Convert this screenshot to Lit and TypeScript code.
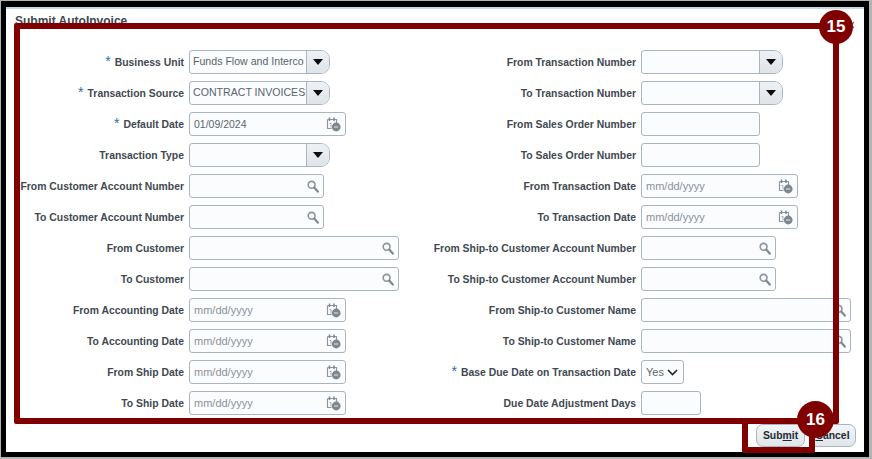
import { LitElement, html, css } from "lit";
import { customElement } from "lit/decorators.js";

type Kind = "select" | "date" | "search" | "text" | "yes";

interface Field {
  label: string;
  kind: Kind;
  width: number;
  value?: string;
  required?: boolean;
}

const leftFields: Field[] = [
  { label: "Business Unit", kind: "select", width: 141, value: "Funds Flow and Interco", required: true },
  { label: "Transaction Source", kind: "select", width: 141, value: "CONTRACT INVOICES", required: true },
  { label: "Default Date", kind: "date", width: 157, value: "01/09/2024", required: true },
  { label: "Transaction Type", kind: "select", width: 141 },
  { label: "From Customer Account Number", kind: "search", width: 135 },
  { label: "To Customer Account Number", kind: "search", width: 135 },
  { label: "From Customer", kind: "search", width: 210 },
  { label: "To Customer", kind: "search", width: 210 },
  { label: "From Accounting Date", kind: "date", width: 157 },
  { label: "To Accounting Date", kind: "date", width: 157 },
  { label: "From Ship Date", kind: "date", width: 157 },
  { label: "To Ship Date", kind: "date", width: 157 },
];

const rightFields: Field[] = [
  { label: "From Transaction Number", kind: "select", width: 142 },
  { label: "To Transaction Number", kind: "select", width: 142 },
  { label: "From Sales Order Number", kind: "text", width: 119 },
  { label: "To Sales Order Number", kind: "text", width: 119 },
  { label: "From Transaction Date", kind: "date", width: 157 },
  { label: "To Transaction Date", kind: "date", width: 157 },
  { label: "From Ship-to Customer Account Number", kind: "search", width: 135 },
  { label: "To Ship-to Customer Account Number", kind: "search", width: 135 },
  { label: "From Ship-to Customer Name", kind: "search", width: 210 },
  { label: "To Ship-to Customer Name", kind: "search", width: 210 },
  { label: "Base Due Date on Transaction Date", kind: "yes", width: 43, required: true },
  { label: "Due Date Adjustment Days", kind: "text", width: 60 },
];

const calendarIcon = html`<svg class="icon" width="15" height="15" viewBox="0 0 15 15">
  <path d="M1.5 2.5h9v5M1.5 2.5v9h4" fill="none" stroke="#8d979f" stroke-width="1.2" />
  <path d="M3.5 .5v3.5M8 .5v3.5" stroke="#7b858d" stroke-width="1.5" />
  <path d="M3.5 6.5h1.5v4" fill="none" stroke="#a3acb3" stroke-width="1" />
  <circle cx="10.2" cy="10" r="4.4" fill="#7e878e" />
  <path d="M8 10h4.2" stroke="#e4e7ea" stroke-width="1" />
</svg>`;

const searchIcon = html`<svg class="icon" width="12" height="13" viewBox="0 0 12 13">
  <circle cx="4.6" cy="4.8" r="3.4" fill="none" stroke="#8b949b" stroke-width="1.6" />
  <path d="M7.2 7.6l3.6 4" stroke="#7f888f" stroke-width="2.2" stroke-linecap="round" />
</svg>`;

@customElement("app-root")
export class AppRoot extends LitElement {
  static styles = css`
    :host {
      display: block;
      position: relative;
      width: 872px;
      height: 459px;
      box-sizing: border-box;
      padding: 1px 3px 2px 1px;
      background: #b4b4b4;
      font-family: "Liberation Sans", Arial, sans-serif;
      overflow: hidden;
    }

    .shell {
      height: 100%;
      box-sizing: border-box;
      padding: 6px 5px 5px 5px;
      background: #000;
    }

    .dialog {
      height: 100%;
      display: flex;
      flex-direction: column;
      box-sizing: border-box;
      background: #fff;
      border-top: 2px solid #c9d8e5;
    }

    .header {
      height: 41px;
      flex: none;
      display: flex;
      justify-content: space-between;
      padding: 5px 9px;
      box-sizing: border-box;
      font-size: 12px;
      font-weight: bold;
      color: #3c4650;
    }

    .close {
      margin: 7px 0 0;
    }

    .form {
      display: flex;
    }

    .col {
      display: grid;
      row-gap: 7px;
      column-gap: 5px;
      grid-auto-rows: 24px;
      align-items: center;
    }

    .col.left {
      width: 406px;
      grid-template-columns: 178px 1fr;
    }

    .col.right {
      grid-template-columns: 224px 1fr;
    }

    .label {
      text-align: right;
      font-size: 10.4px;
      font-weight: bold;
      color: #3f4952;
      white-space: nowrap;
    }

    .star {
      color: #2a6fa8;
      font-size: 14px;
      font-weight: normal;
      line-height: 10px;
      margin-right: 4px;
    }

    .field {
      height: 24px;
      display: flex;
      align-items: center;
      box-sizing: border-box;
      background: #fbfcfe;
      border: 1px solid #a9b6c1;
      border-radius: 3px;
      font-size: 11px;
      color: #5a646d;
    }

    .value {
      flex: 1;
      min-width: 0;
      overflow: hidden;
      white-space: nowrap;
      padding-left: 4px;
    }

    .value.filled {
      font-size: 10.5px;
    }

    .value.muted {
      color: #8a9299;
    }

    .icon {
      flex: none;
      margin-right: 4px;
    }

    .field.select {
      padding: 0;
      border-radius: 3px 9px 9px 3px;
      overflow: hidden;
    }

    .field.select .value {
      padding-left: 3px;
      padding-bottom: 2px;
      font-size: 10.6px;
    }

    .drop {
      flex: none;
      width: 23px;
      height: 100%;
      display: flex;
      align-items: center;
      justify-content: center;
      box-sizing: border-box;
      background: linear-gradient(#eef1f4, #dfe4e9);
      border-left: 1px solid #a9b6c1;
    }

    .arrow {
      width: 0;
      height: 0;
      border-left: 5px solid transparent;
      border-right: 5px solid transparent;
      border-top: 6px solid #0c0c0c;
    }

    .chevron {
      flex: none;
      margin-right: 5px;
    }

    .footer {
      flex: 1;
      display: flex;
      justify-content: flex-end;
      align-items: flex-start;
      gap: 4px;
      padding: 9px 8px 0 0;
    }

    .btn {
      height: 23px;
      box-sizing: border-box;
      padding: 0 4px;
      background: linear-gradient(#f3f5f7, #dfe5ea);
      border: 1px solid #a9b6c1;
      border-radius: 7px;
      font: bold 10.4px "Liberation Sans", Arial, sans-serif;
      color: #1f2a35;
    }

    .submit {
      width: 49px;
    }

    .cancel {
      width: 47px;
    }

    /* callouts drawn over the screenshot */
    .frame {
      position: absolute;
      box-sizing: border-box;
      border: 6px solid #800000;
      border-radius: 2px;
    }

    .frame.form-frame {
      left: 14px;
      top: 23px;
      width: 825px;
      height: 401px;
    }

    .frame.btn-frame {
      left: 742px;
      top: 418px;
      width: 73px;
      height: 35px;
    }

    .badge {
      position: absolute;
      width: 34px;
      height: 34px;
      border-radius: 50%;
      display: flex;
      align-items: center;
      justify-content: center;
      background: #800000;
      color: #fff;
      font-size: 17px;
      font-weight: bold;
    }

    .badge.b15 {
      left: 819px;
      top: 10px;
    }

    .badge.b16 {
      left: 797px;
      top: 401px;
      width: 37px;
      height: 37px;
    }
  `;

  renderControl(f: Field) {
    const style = `width:${f.width}px`;
    if (f.kind === "select") {
      return html`<div class="field select" style=${style}>
        <div class="value">${f.value ?? ""}</div>
        <div class="drop"><div class="arrow"></div></div>
      </div>`;
    }
    if (f.kind === "date") {
      return html`<div class="field" style=${style}>
        <div class="value ${f.value ? "filled" : "muted"}">${f.value ?? "mm/dd/yyyy"}</div>
        ${calendarIcon}
      </div>`;
    }
    if (f.kind === "search") {
      return html`<div class="field" style=${style}>
        <div class="value"></div>
        ${searchIcon}
      </div>`;
    }
    if (f.kind === "yes") {
      return html`<div class="field" style=${style}>
        <div class="value">Yes</div>
        <svg class="chevron" width="11" height="7" viewBox="0 0 11 7">
          <path d="M1 1l4.5 4.5L10 1" fill="none" stroke="#222" stroke-width="1.6" />
        </svg>
      </div>`;
    }
    return html`<div class="field" style=${style}></div>`;
  }

  renderCol(cls: string, fields: Field[]) {
    return html`<div class="col ${cls}">
      ${fields.map(
        (f) => html`
          <div class="label">${f.required ? html`<span class="star">*</span>` : ""}${f.label}</div>
          ${this.renderControl(f)}
        `
      )}
    </div>`;
  }

  render() {
    return html`
      <div class="shell">
        <div class="dialog">
          <div class="header">
            <span>Submit AutoInvoice</span>
            <svg class="close" width="8" height="8" viewBox="0 0 8 8">
              <path d="M1 1l6 6M7 1l-6 6" stroke="#6f7880" stroke-width="1.5" />
            </svg>
          </div>
          <div class="form">
            ${this.renderCol("left", leftFields)} ${this.renderCol("right", rightFields)}
          </div>
          <div class="footer">
            <button class="btn submit">Sub<u>m</u>it</button>
            <button class="btn cancel"><u>C</u>ancel</button>
          </div>
        </div>
      </div>
      <div class="frame form-frame"></div>
      <div class="frame btn-frame"></div>
      <div class="badge b15">15</div>
      <div class="badge b16">16</div>
    `;
  }
}

declare global {
  interface HTMLElementTagNameMap {
    "app-root": AppRoot;
  }
}
